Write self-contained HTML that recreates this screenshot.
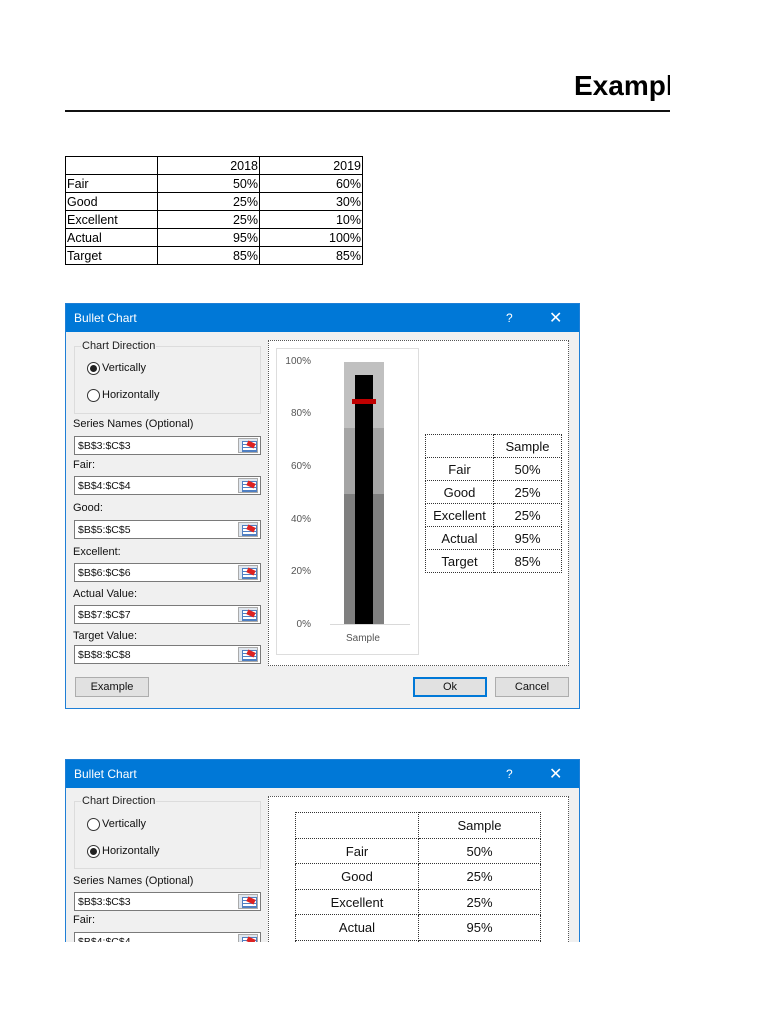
<!DOCTYPE html>
<html><head><meta charset="utf-8">
<style>
*{margin:0;padding:0;box-sizing:border-box}
body{width:768px;height:1024px;background:#fff;position:relative;overflow:hidden;font-family:"Liberation Sans",sans-serif;color:#000}
.a{position:absolute}
.t1{border-collapse:collapse;position:absolute;left:65px;top:156px;font-size:12.5px}
.t1 td{border:1px solid #000;height:18px;padding:0 1px;line-height:16px}
.dlg{position:absolute;left:65px;width:515px;background:#f0f0f0;border:1px solid #1f7fd6;font-size:11px;overflow:hidden}
.tb{position:absolute;left:0;top:0;right:0;height:28px;background:#0078d7;color:#fff;font-size:12px}
.tb span{position:absolute;top:7px}
.grp{position:absolute;left:8px;width:187px;height:68px;border:1px solid #dcdcdc}
.grp .lg{position:absolute;left:6px;top:-7px;background:#f0f0f0;padding:0 1px;color:#222}
.rad{position:absolute;left:12px;width:13px;height:13px;border:1px solid #333;border-radius:50%;background:#fff}
.rad.on:after{content:"";position:absolute;left:2px;top:2px;width:7px;height:7px;border-radius:50%;background:#222}
.rl{position:absolute;left:28px;color:#111}
.lbl{position:absolute;left:7px;color:#111}
.inp{position:absolute;left:8px;width:187px;height:19px;border:1px solid #7a7a7a;background:#fff;font-size:10.5px;padding:3px 0 0 3px;color:#111}
.ico{position:absolute;right:2px;top:1px;width:20px;height:15px;border:1px solid #aaa;background:#dfe6ee}
.ico:before{content:"";position:absolute;left:3px;top:2px;width:13px;height:9px;background:repeating-linear-gradient(0deg,#4f7fc2 0 1px,#fff 1px 3px);border:1px solid #4f7fc2}
.ico:after{content:"";position:absolute;left:8px;top:3px;width:8px;height:5px;background:#d22;transform:rotate(25deg)}
.panel{position:absolute;left:202px;width:301px;background:#fff;border:1px dotted #555}
.btn{position:absolute;height:20px;border:1px solid #adadad;background:#e1e1e1;text-align:center;line-height:18px;color:#111}
.st{position:absolute;border-collapse:collapse;font-size:13px;text-align:center}
.st td{border:1px dotted #333;color:#111}
</style></head><body>
<div class="a" style="left:574px;top:68px;font-size:28px;font-weight:bold;width:96px;overflow:hidden;white-space:nowrap;line-height:36px">Example</div>
<div class="a" style="left:65px;top:110px;width:605px;height:2px;background:#111"></div>

<table class="t1">
<tr><td style="width:92px"></td><td style="width:102px;text-align:right">2018</td><td style="width:103px;text-align:right">2019</td></tr>
<tr><td>Fair</td><td style="text-align:right">50%</td><td style="text-align:right">60%</td></tr>
<tr><td>Good</td><td style="text-align:right">25%</td><td style="text-align:right">30%</td></tr>
<tr><td>Excellent</td><td style="text-align:right">25%</td><td style="text-align:right">10%</td></tr>
<tr><td>Actual</td><td style="text-align:right">95%</td><td style="text-align:right">100%</td></tr>
<tr><td>Target</td><td style="text-align:right">85%</td><td style="text-align:right">85%</td></tr>
</table>

<div class="dlg" style="top:303px;height:406px">
 <div class="tb"><span style="left:8px">Bullet Chart</span><span style="left:440px">?</span><span style="left:483px;font-size:16px;top:4px">✕</span></div>
 <div class="grp" style="top:42px"><div class="lg">Chart Direction</div></div>
 <div class="rad on" style="top:58px;left:21px"></div><div class="rl" style="top:58px;left:36px">Vertically</div>
 <div class="rad" style="top:85px;left:21px"></div><div class="rl" style="top:85px;left:36px">Horizontally</div>
 <div class="lbl" style="top:114px">Series Names (Optional)</div>
 <div class="inp" style="top:132px">$B$3:$C$3<div class="ico"></div></div>
 <div class="lbl" style="top:155px">Fair:</div>
 <div class="inp" style="top:172px">$B$4:$C$4<div class="ico"></div></div>
 <div class="lbl" style="top:198px">Good:</div>
 <div class="inp" style="top:216px">$B$5:$C$5<div class="ico"></div></div>
 <div class="lbl" style="top:242px">Excellent:</div>
 <div class="inp" style="top:259px">$B$6:$C$6<div class="ico"></div></div>
 <div class="lbl" style="top:284px">Actual Value:</div>
 <div class="inp" style="top:301px">$B$7:$C$7<div class="ico"></div></div>
 <div class="lbl" style="top:326px">Target Value:</div>
 <div class="inp" style="top:341px">$B$8:$C$8<div class="ico"></div></div>
 <div class="panel" style="top:36px;height:326px"></div>
 <div class="a" style="left:210px;top:44px;width:143px;height:307px;border:1px solid #ddd;background:#fff;font-size:10px;color:#555">
  <div class="a" style="right:107px;top:7px">100%</div>
  <div class="a" style="right:107px;top:59px">80%</div>
  <div class="a" style="right:107px;top:112px">60%</div>
  <div class="a" style="right:107px;top:165px">40%</div>
  <div class="a" style="right:107px;top:217px">20%</div>
  <div class="a" style="right:107px;top:270px">0%</div>
  <div class="a" style="left:67px;top:13px;width:40px;height:66px;background:#c0c0c0"></div>
  <div class="a" style="left:67px;top:79px;width:40px;height:66px;background:#a5a5a5"></div>
  <div class="a" style="left:67px;top:145px;width:40px;height:130px;background:#7f7f7f"></div>
  <div class="a" style="left:78px;top:26px;width:18px;height:249px;background:#000"></div>
  <div class="a" style="left:75px;top:50px;width:24px;height:5px;background:#c00000"></div>
  <div class="a" style="left:53px;top:275px;width:80px;height:1px;background:#d9d9d9"></div>
  <div class="a" style="left:69px;top:284px;color:#555">Sample</div>
 </div>
 <table class="st" style="left:359px;top:130px">
  <tr><td style="width:68px;height:23px"></td><td style="width:68px">Sample</td></tr>
  <tr><td style="height:23px">Fair</td><td>50%</td></tr>
  <tr><td style="height:23px">Good</td><td>25%</td></tr>
  <tr><td style="height:23px">Excellent</td><td>25%</td></tr>
  <tr><td style="height:23px">Actual</td><td>95%</td></tr>
  <tr><td style="height:23px">Target</td><td>85%</td></tr>
 </table>
 <div class="btn" style="left:9px;top:373px;width:74px">Example</div>
 <div class="btn" style="left:347px;top:373px;width:74px;border:2px solid #0078d7;line-height:16px">Ok</div>
 <div class="btn" style="left:429px;top:373px;width:74px">Cancel</div>
</div>

<div class="dlg" style="top:759px;height:183px;border-bottom:none">
 <div class="tb"><span style="left:8px">Bullet Chart</span><span style="left:440px">?</span><span style="left:483px;font-size:16px;top:4px">✕</span></div>
 <div class="grp" style="top:41px"><div class="lg">Chart Direction</div></div>
 <div class="rad" style="top:58px;left:21px"></div><div class="rl" style="top:58px;left:36px">Vertically</div>
 <div class="rad on" style="top:85px;left:21px"></div><div class="rl" style="top:85px;left:36px">Horizontally</div>
 <div class="lbl" style="top:115px">Series Names (Optional)</div>
 <div class="inp" style="top:132px">$B$3:$C$3<div class="ico"></div></div>
 <div class="lbl" style="top:154px">Fair:</div>
 <div class="inp" style="top:172px">$B$4:$C$4<div class="ico"></div></div>
 <div class="panel" style="top:36px;height:200px"></div>
 <table class="st" style="left:229px;top:52px">
  <tr><td style="width:123px;height:26px"></td><td style="width:122px">Sample</td></tr>
  <tr><td style="height:25px">Fair</td><td>50%</td></tr>
  <tr><td style="height:26px">Good</td><td>25%</td></tr>
  <tr><td style="height:25px">Excellent</td><td>25%</td></tr>
  <tr><td style="height:26px">Actual</td><td>95%</td></tr>
  <tr><td style="height:25px">Target</td><td>85%</td></tr>
 </table>
</div>
</body></html>
